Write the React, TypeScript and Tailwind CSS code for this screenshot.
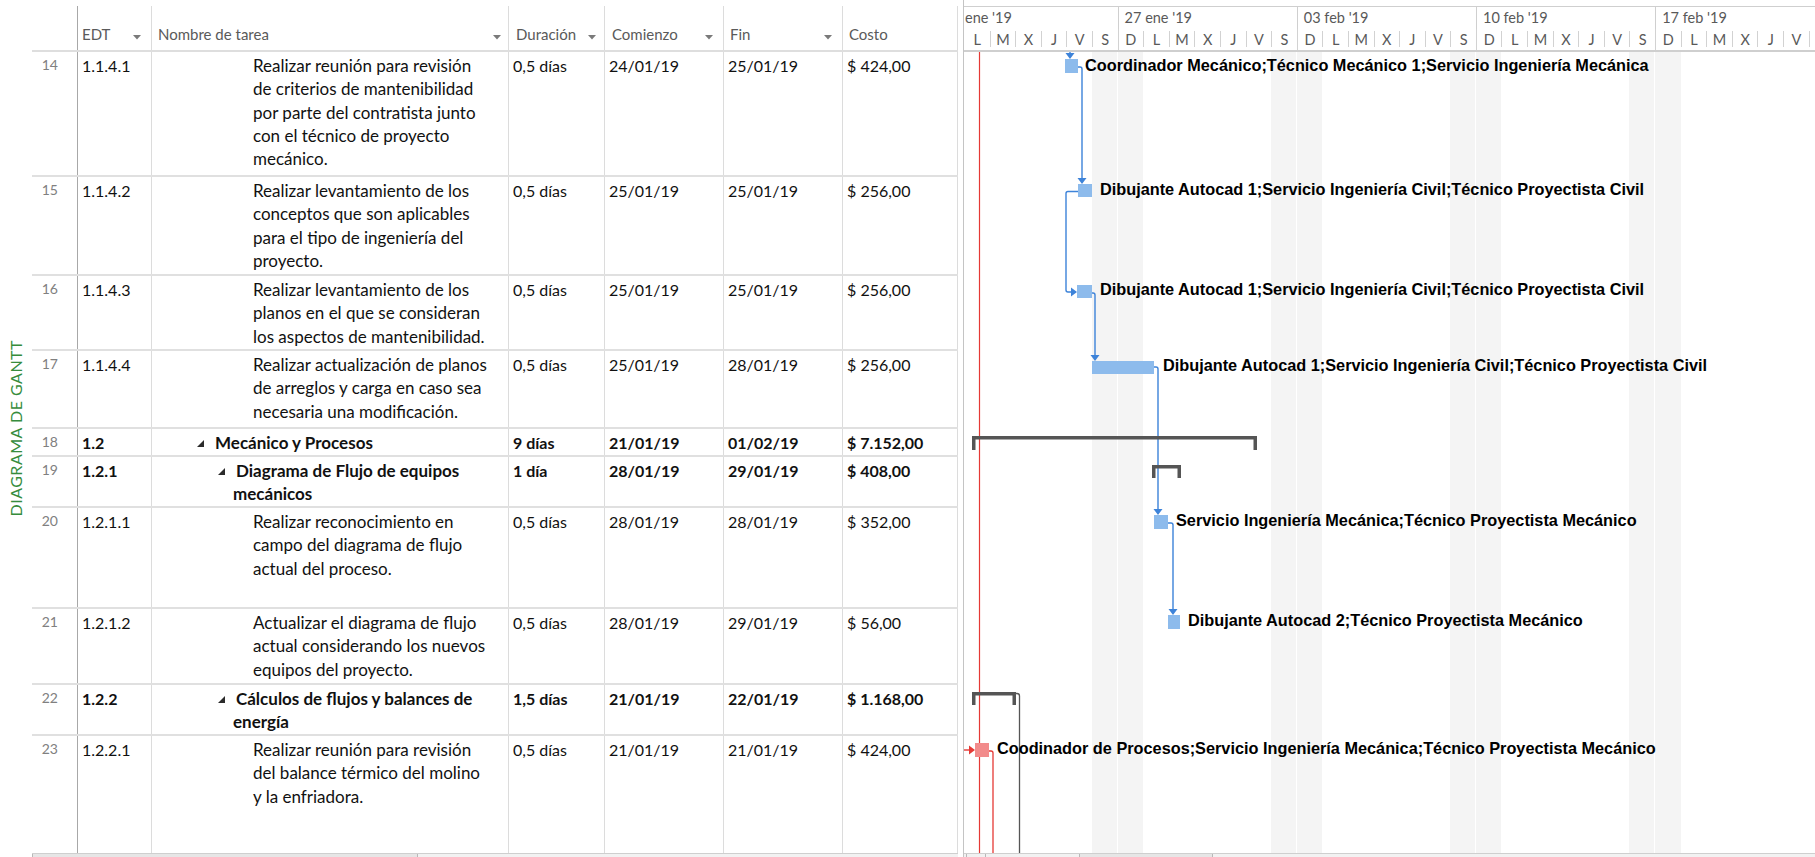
import React from "react";

type Row = {
  id: number;
  edt: string;
  name: string[];
  level: 0 | 1 | 2;
  dur: string;
  start: string;
  end: string;
  cost: string;
  h: number;
};

const ROWS: Row[] = [
  { id: 14, edt: "1.1.4.1", level: 0, dur: "0,5 días", start: "24/01/19", end: "25/01/19", cost: "$ 424,00", h: 125,
    name: ["Realizar reunión para revisión", "de criterios de mantenibilidad", "por parte del contratista junto", "con el técnico de proyecto", "mecánico."] },
  { id: 15, edt: "1.1.4.2", level: 0, dur: "0,5 días", start: "25/01/19", end: "25/01/19", cost: "$ 256,00", h: 99,
    name: ["Realizar levantamiento de los", "conceptos que son aplicables", "para el tipo de ingeniería del", "proyecto."] },
  { id: 16, edt: "1.1.4.3", level: 0, dur: "0,5 días", start: "25/01/19", end: "25/01/19", cost: "$ 256,00", h: 75,
    name: ["Realizar levantamiento de los", "planos en el que se consideran", "los aspectos de mantenibilidad."] },
  { id: 17, edt: "1.1.4.4", level: 0, dur: "0,5 días", start: "25/01/19", end: "28/01/19", cost: "$ 256,00", h: 78,
    name: ["Realizar actualización de planos", "de arreglos y carga en caso sea", "necesaria una modificación."] },
  { id: 18, edt: "1.2", level: 1, dur: "9 días", start: "21/01/19", end: "01/02/19", cost: "$ 7.152,00", h: 28,
    name: ["Mecánico y Procesos"] },
  { id: 19, edt: "1.2.1", level: 2, dur: "1 día", start: "28/01/19", end: "29/01/19", cost: "$ 408,00", h: 51,
    name: ["Diagrama de Flujo de equipos", "mecánicos"] },
  { id: 20, edt: "1.2.1.1", level: 0, dur: "0,5 días", start: "28/01/19", end: "28/01/19", cost: "$ 352,00", h: 101,
    name: ["Realizar reconocimiento en", "campo del diagrama de flujo", "actual del proceso."] },
  { id: 21, edt: "1.2.1.2", level: 0, dur: "0,5 días", start: "28/01/19", end: "29/01/19", cost: "$ 56,00", h: 76,
    name: ["Actualizar el diagrama de flujo", "actual considerando los nuevos", "equipos del proyecto."] },
  { id: 22, edt: "1.2.2", level: 2, dur: "1,5 días", start: "21/01/19", end: "22/01/19", cost: "$ 1.168,00", h: 51,
    name: ["Cálculos de flujos y balances de", "energía"] },
  { id: 23, edt: "1.2.2.1", level: 0, dur: "0,5 días", start: "21/01/19", end: "21/01/19", cost: "$ 424,00", h: 0,
    name: ["Realizar reunión para revisión", "del balance térmico del molino", "y la enfriadora."] },
];

const DAY_W = 25.6;
const LETTERS = ["L", "M", "X", "J", "V", "S", "D"];
const DAYS = Array.from({ length: 33 }, (_, i) => LETTERS[i % 7]);

const WEEKS = [
  { label: "ene '19", days: 6 },
  { label: "27 ene '19", days: 7 },
  { label: "03 feb '19", days: 7 },
  { label: "10 feb '19", days: 7 },
  { label: "17 feb '19", days: 6 },
];

const LABELS = [
  { x: 121, cy: 13, text: "Coordinador Mecánico;Técnico Mecánico 1;Servicio Ingeniería Mecánica" },
  { x: 136, cy: 137, text: "Dibujante Autocad 1;Servicio Ingeniería Civil;Técnico Proyectista Civil" },
  { x: 136, cy: 237, text: "Dibujante Autocad 1;Servicio Ingeniería Civil;Técnico Proyectista Civil" },
  { x: 199, cy: 313, text: "Dibujante Autocad 1;Servicio Ingeniería Civil;Técnico Proyectista Civil" },
  { x: 212, cy: 468, text: "Servicio Ingeniería Mecánica;Técnico Proyectista Mecánico" },
  { x: 224, cy: 568, text: "Dibujante Autocad 2;Técnico Proyectista Mecánico" },
  { x: 33, cy: 696, text: "Coodinador de Procesos;Servicio Ingeniería Mecánica;Técnico Proyectista Mecánico" },
];

const BLUE = "#3d83d9";
const BAR = "#8dbbec";

function Caret() {
  return (
    <svg width="8" height="5" viewBox="0 0 8 5" className="shrink-0">
      <polygon points="0,0 8,0 4,4.5" fill="#7a7a7a" />
    </svg>
  );
}

function Collapse() {
  return (
    <svg width="7" height="7" viewBox="0 0 7 7" className="shrink-0">
      <polygon points="7,0 7,7 0,7" fill="#2b2b2b" />
    </svg>
  );
}

function down(x: number, tip: number) {
  return `${x - 4.5},${tip - 6} ${x + 4.5},${tip - 6} ${x},${tip}`;
}
function right(tip: number, y: number) {
  return `${tip - 6},${y - 4.5} ${tip - 6},${y + 4.5} ${tip},${y}`;
}

function TaskName({ row }: { row: Row }) {
  if (row.level === 0) {
    return (
      <div className="pl-[101px]">
        {row.name.map((l, i) => (
          <div key={i} className="whitespace-nowrap">{l}</div>
        ))}
      </div>
    );
  }
  const pl = row.level === 1 ? "pl-[45px]" : "pl-[66px]";
  return (
    <div>
      <div className={`flex items-center gap-[11px] whitespace-nowrap ${pl}`}>
        <span className="translate-y-[1px]"><Collapse /></span>
        <span>{row.name[0]}</span>
      </div>
      {row.name.slice(1).map((l, i) => (
        <div key={i} className="whitespace-nowrap pl-[81px]">{l}</div>
      ))}
    </div>
  );
}

function GanttChart() {
  return (
    <svg className="absolute inset-0" width="851" height="801" viewBox="0 0 851 801">
      {/* today */}
      <line x1="15.5" y1="0" x2="15.5" y2="801" stroke="#e53935" strokeWidth="1.2" />

      {/* links */}
      <g fill="none" stroke={BLUE} strokeWidth="1.4">
        <path d="M106 0 V2" />
        <path d="M114 15 H116 Q118 15 118 17 V126" />
        <path d="M114 139.5 H104 Q102 139.5 102 141.5 V238 Q102 240 104 240 H109" />
        <path d="M128 241 H129 Q131 241 131 243 V303" />
        <path d="M190 315 H192 Q194 315 194 317 V457" />
        <path d="M204 471 H207 Q209 471 209 473 V557" />
      </g>
      <g fill={BLUE}>
        <polygon points={down(106, 7)} />
        <polygon points={down(118, 132)} />
        <polygon points={right(113, 240)} />
        <polygon points={down(131, 309)} />
        <polygon points={down(194, 463)} />
        <polygon points={down(209, 563)} />
      </g>

      {/* bars */}
      <g fill={BAR}>
        <rect x="101" y="7" width="13" height="14" />
        <rect x="114" y="132" width="14" height="13" />
        <rect x="113" y="233" width="15" height="13" />
        <rect x="128" y="309" width="62" height="13" />
        <rect x="190" y="463" width="14" height="14" />
        <rect x="204" y="563" width="12" height="14" />
      </g>

      {/* summaries */}
      <g fill="#555555">
        <rect x="8" y="384" width="285" height="3.5" />
        <rect x="8" y="384" width="3.5" height="14" />
        <rect x="289.5" y="384" width="3.5" height="14" />

        <rect x="188" y="413" width="29" height="3.5" />
        <rect x="188" y="413" width="3.5" height="13" />
        <rect x="213.5" y="413" width="3.5" height="13" />

        <rect x="8" y="640" width="44" height="3.5" />
        <rect x="8" y="640" width="3.5" height="13" />
        <rect x="48.5" y="640" width="3.5" height="13" />
      </g>
      <path d="M52 641.5 H53 Q55.5 641.5 55.5 644 V801" fill="none" stroke="#555555" strokeWidth="1.3" />

      {/* critical task */}
      <path d="M-1 698 H6" stroke="#e53935" strokeWidth="1.4" fill="none" />
      <polygon points={right(11, 698)} fill="#e53935" />
      <rect x="11" y="691" width="14" height="14" fill="#f28b8b" />
      <path d="M25 699 H27 Q29 699 29 701 V801" stroke="#e53935" strokeWidth="1.3" fill="none" />
    </svg>
  );
}

export default function App() {
  const cellText = "px-[4px] pt-[2px]";
  return (
    <div className="flex h-[857px] w-[1815px] overflow-hidden bg-white font-['Lato',sans-serif] text-[#111111]">
      {/* side label */}
      <div className="flex w-[32px] shrink-0 items-center justify-center">
        <span className="rotate-180 text-[16px] tracking-[0.5px] text-[#368c3c] [writing-mode:vertical-rl]">
          DIAGRAMA DE GANTT
        </span>
      </div>

      {/* sheet */}
      <div className="flex w-[926px] shrink-0 flex-col pt-[6px]">
        <div className="flex h-[46px] shrink-0 border-b-2 border-[#dedede] text-[15px] text-[#5a5a5a]">
          <div className="w-[46px] shrink-0 border-r border-[#a8a8a8]" />
          <div className="flex w-[74px] shrink-0 items-end justify-between border-r border-[#dcdcdc] pb-[5px] pl-[4px] pr-[10px]">
            <span>EDT</span>
            <span className="mb-[5px]"><Caret /></span>
          </div>
          <div className="flex w-[357px] shrink-0 items-end justify-between border-r border-[#dcdcdc] pb-[5px] pl-[6px] pr-[7px]">
            <span>Nombre de tarea</span>
            <span className="mb-[5px]"><Caret /></span>
          </div>
          <div className="flex w-[96px] shrink-0 items-end justify-between border-r border-[#dcdcdc] pb-[5px] pl-[7px] pr-[8px]">
            <span>Duración</span>
            <span className="mb-[5px]"><Caret /></span>
          </div>
          <div className="flex w-[119px] shrink-0 items-end justify-between border-r border-[#dcdcdc] pb-[5px] pl-[7px] pr-[10px]">
            <span>Comienzo</span>
            <span className="mb-[5px]"><Caret /></span>
          </div>
          <div className="flex w-[119px] shrink-0 items-end justify-between border-r border-[#dcdcdc] pb-[5px] pl-[6px] pr-[10px]">
            <span>Fin</span>
            <span className="mb-[5px]"><Caret /></span>
          </div>
          <div className="flex w-[115px] shrink-0 items-end border-r border-[#dcdcdc] pb-[5px] pl-[6px]">
            <span>Costo</span>
          </div>
        </div>

        <div className="flex min-h-0 flex-1 flex-col text-[16px] leading-[23.3px]">
          {ROWS.map((r) => {
            const bold = r.level > 0 ? "font-bold" : "";
            const last = r.h === 0;
            return (
              <div
                key={r.id}
                className={`flex shrink-0 ${last ? "flex-1" : "border-b-2 border-[#e0e0e0]"} ${bold}`}
                style={last ? undefined : { height: r.h }}
              >
                <div className="w-[46px] shrink-0 border-r border-[#a8a8a8] pr-[19px] pt-[3px] text-right text-[14px] font-normal leading-[20px] text-[#808080]">
                  {r.id}
                </div>
                <div className={`w-[74px] shrink-0 border-r border-[#dcdcdc] ${cellText}`}>{r.edt}</div>
                <div className="w-[357px] shrink-0 border-r border-[#dcdcdc] pt-[2px] text-[17px]">
                  <TaskName row={r} />
                </div>
                <div className={`w-[96px] shrink-0 border-r border-[#dcdcdc] ${cellText}`}>{r.dur}</div>
                <div className={`w-[119px] shrink-0 border-r border-[#dcdcdc] ${cellText}`}>{r.start}</div>
                <div className={`w-[119px] shrink-0 border-r border-[#dcdcdc] ${cellText}`}>{r.end}</div>
                <div className={`w-[115px] shrink-0 border-r border-[#dcdcdc] ${cellText}`}>{r.cost}</div>
              </div>
            );
          })}
        </div>

        <div className="h-[4px] shrink-0 border-t border-[#cfcfcf] bg-[#f2f2f2]">
          <div className="h-full w-[386px] border-x border-[#b8b8b8] bg-[#e6e6e6]" />
        </div>
      </div>

      {/* splitter */}
      <div className="w-[6px] shrink-0 border-r border-[#c4c4c4]" />

      {/* gantt */}
      <div className="flex min-w-0 flex-1 flex-col pt-[6px]">
        <div className="flex h-[46px] shrink-0 flex-col overflow-hidden border-t border-b-2 border-[#cfcfcf] text-[14.5px] text-[#595959]">
          <div className="flex h-[22px] shrink-0">
            {WEEKS.map((w, i) => (
              <div
                key={i}
                className={`shrink-0 whitespace-nowrap leading-[22px] ${i === 0 ? "pl-[1px]" : "border-l border-[#cfcfcf] pl-[6px]"}`}
                style={{ width: w.days * DAY_W }}
              >
                {w.label}
              </div>
            ))}
          </div>
          <div className="flex min-h-0 flex-1">
            {DAYS.map((d, i) => (
              <div key={i} className="flex w-[25.6px] shrink-0">
                <div
                  className={`w-px shrink-0 bg-[#d2d2d2] ${
                    i === 0 ? "opacity-0" : d === "D" ? "self-stretch" : "mb-[3px] h-[16px] self-end"
                  }`}
                />
                <div className="flex-1 text-center leading-[22px]">{d}</div>
              </div>
            ))}
            <div className="mb-[3px] h-[16px] w-px shrink-0 self-end bg-[#d2d2d2]" />
          </div>
        </div>

        <div className="relative min-h-0 flex-1 overflow-hidden">
          <div className="flex h-full">
            {DAYS.map((d, i) => (
              <div
                key={i}
                className={`h-full w-[25.6px] shrink-0 ${
                  d === "S" ? "border-r border-white bg-[#f4f4f4]" : d === "D" ? "bg-[#f4f4f4]" : ""
                }`}
              />
            ))}
          </div>
          <GanttChart />
          {LABELS.map((l, i) => (
            <span
              key={i}
              className="absolute whitespace-nowrap font-['Liberation_Sans',sans-serif] text-[16.3px] font-bold leading-[18px] text-black"
              style={{ left: l.x, top: l.cy - 9 }}
            >
              {l.text}
            </span>
          ))}
        </div>

        <div className="flex h-[4px] shrink-0 border-t border-[#cfcfcf] bg-[#f2f2f2]">
          <div className="ml-[2px] h-full w-[20px] border-x border-[#b8b8b8]" />
          <div className="ml-[93px] h-full w-[134px] border-x border-[#b8b8b8] bg-[#e6e6e6]" />
        </div>
      </div>
    </div>
  );
}
